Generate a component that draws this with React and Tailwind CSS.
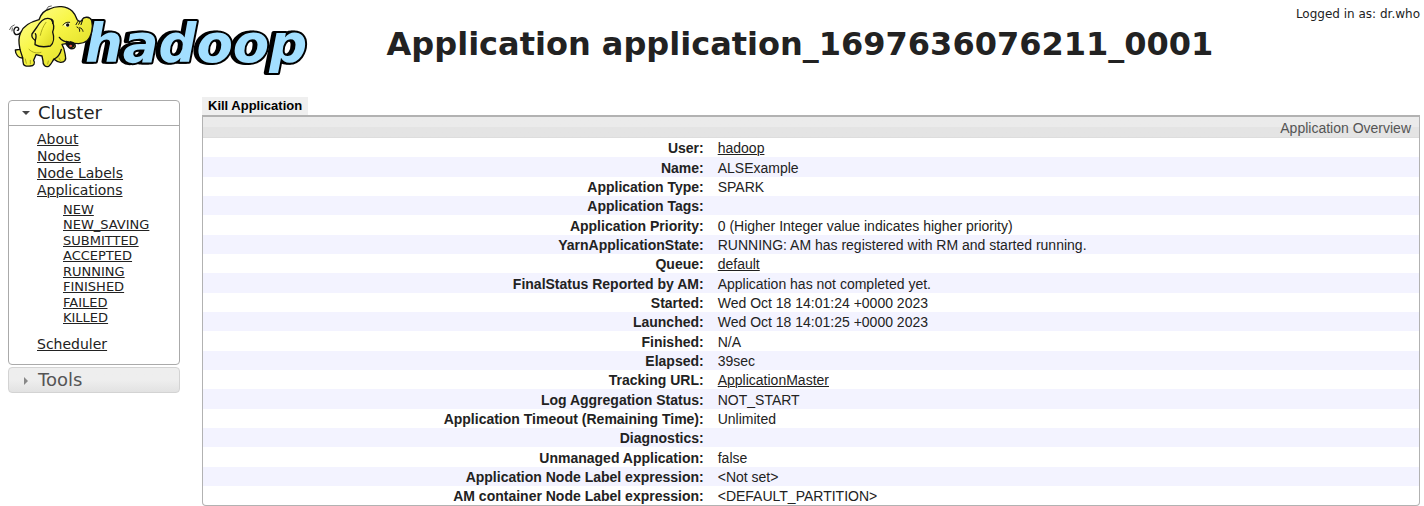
const states = [
  'NEW',
  'NEW_SAVING',
  'SUBMITTED',
  'ACCEPTED',
  'RUNNING',
  'FINISHED',
  'FAILED',
  'KILLED',
];

const overview = [
  ['User', 'hadoop', true],
  ['Name', 'ALSExample'],
  ['Application Type', 'SPARK'],
  ['Application Tags', ''],
  ['Application Priority', '0 (Higher Integer value indicates higher priority)'],
  ['YarnApplicationState', 'RUNNING: AM has registered with RM and started running.'],
  ['Queue', 'default', true],
  ['FinalStatus Reported by AM', 'Application has not completed yet.'],
  ['Started', 'Wed Oct 18 14:01:24 +0000 2023'],
  ['Launched', 'Wed Oct 18 14:01:25 +0000 2023'],
  ['Finished', 'N/A'],
  ['Elapsed', '39sec'],
  ['Tracking URL', 'ApplicationMaster', true],
  ['Log Aggregation Status', 'NOT_START'],
  ['Application Timeout (Remaining Time)', 'Unlimited'],
  ['Diagnostics', ''],
  ['Unmanaged Application', 'false'],
  ['Application Node Label expression', '<Not set>'],
  ['AM container Node Label expression', '<DEFAULT_PARTITION>'],
];

function Logo() {
  return (
    <svg className="h-20 w-[308px] shrink-0" viewBox="0 0 308 80" role="img" aria-label="hadoop">
      <defs>
        <linearGradient id="hide" x1="0" y1="0" x2="1" y2="1">
          <stop offset="0" stopColor="#ffffa0" />
          <stop offset="0.45" stopColor="#f8f646" />
          <stop offset="1" stopColor="#d9d51e" />
        </linearGradient>
      </defs>
      <text
        className="font-['DejaVu_Sans',sans-serif] font-bold italic drop-shadow-[-3px_0_0_#000]"
        x="85"
        y="62"
        fontSize="53"
        fill="#a2dfff"
        stroke="#000"
        strokeWidth="4"
        strokeLinejoin="round"
        paintOrder="stroke"
      >
        hadoop
      </text>
      <g transform="scale(0.3333)" stroke="#111" strokeWidth="4" strokeLinejoin="round" strokeLinecap="round">
        <path fill="none" d="M64 96C54 107 44 106 42 96C40 87 46 80 53 82C58 84 57 91 52 91" />
        <path
          fill="url(#hide)"
          d="M62 98C70 76 91 66 117 59C124 38 136 30 149 27C170 15 201 18 217 34C224 41 228 49 231 58C236 66 245 66 247 58C251 49 271 49 275 62C280 80 275 109 261 122C247 134 225 132 212 126C228 130 229 139 222 145C212 149 203 141 198 131L186 133C193 144 194 155 196 166C200 181 193 187 183 187C172 188 166 180 162 177C156 185 153 195 146 199C136 203 128 194 129 183L126 168L108 164L101 181C107 190 101 198 91 198C77 200 69 197 69 185L68 174C56 175 46 164 46 150L60 148C55 126 55 112 62 98Z"
        />
        <path fill="none" d="M163 177C174 171 181 161 184 148M60 148C62 156 66 166 68 174" />
        <path
          fill="url(#hide)"
          d="M154 58C137 49 121 64 111 81L96 102C94 111 99 117 106 121L105 134C119 142 137 141 151 138C162 129 163 111 158 96C163 84 162 71 154 58Z"
        />
        <path fill="none" d="M154 58C160 59 160 65 158 70M106 121C109 111 109 105 106 101M178 112C185 122 197 127 212 126" />
        <path fill="none" strokeWidth="3" d="M233 65L228 74M240 66L236 73M248 60L243 74M231 81C237 83 240 88 239 94M239 83C246 84 248 90 249 94" />
        <path fill="#111" d="M199 124C206 128 213 129 222 130C225 138 219 143 213 142C205 140 200 135 199 124Z" />
        <path fill="#df5440" stroke="none" d="M207 138C210 133 215 134 217 138C215 142 210 142 207 138Z" />
        <path fill="#fbfad0" stroke="none" d="M192 76C196 68 204 66 210 70C210 79 204 83 197 80Z" />
        <ellipse cx="203" cy="75" rx="5" ry="5.5" fill="#111" stroke="none" />
        <path fill="none" strokeWidth="3" d="M189 75C195 67 202 66 209 67" />
        <path fill="none" stroke="#aaa71c" strokeWidth="3" d="M76 177L79 190M91 181L91 191M145 183L143 192M177 174L181 181M87 148C98 159 111 161 123 157M138 67C129 79 124 93 121 106" />
        <path fill="none" strokeWidth="2" d="M29 89L34 80L43 75M36 93L37 84M140 28L145 20L154 18" />
      </g>
    </svg>
  );
}

function NavLink({ children }) {
  return <a href="#" className="underline decoration-1">{children}</a>;
}

export default function App() {
  return (
    <div className="bg-white font-['DejaVu_Sans',sans-serif] text-[#222222]">
      <header className="flex items-start">
        <Logo />
        <h1 className="min-w-0 flex-1 pt-6 pr-1 text-center text-[32px] leading-10 font-bold">
          Application application_1697636076211_0001
        </h1>
        <p className="shrink-0 pt-1 pr-1 text-xs leading-5">Logged in as: dr.who</p>
      </header>

      <div className="flex items-start gap-[22px] pr-1 pl-2">
        <nav className="mt-5 w-[172px] shrink-0">
          <section className="rounded border border-[#aaaaaa]">
            <h3 className="border-b border-[#aaaaaa]">
              <button type="button" className="flex h-6 w-full items-center gap-2 pl-3 text-lg leading-6">
                <svg className="h-2 w-[9px]" viewBox="0 0 9 8" fill="#454545"><path d="M1 2h8L5 6z" /></svg>
                Cluster
              </button>
            </h3>
            <ul className="pt-[5px] pb-[11px] pl-7 text-sm leading-[17px]">
              <li><NavLink>About</NavLink></li>
              <li><NavLink>Nodes</NavLink></li>
              <li><NavLink>Node Labels</NavLink></li>
              <li>
                <NavLink>Applications</NavLink>
                <ul className="mt-[3px] mb-2.5 pl-[26px] text-[13px]">
                  {states.map((s) => (
                    <li key={s} className="h-[15px] leading-[15px] nth-[2n]:h-4"><NavLink>{s}</NavLink></li>
                  ))}
                </ul>
              </li>
              <li><NavLink>Scheduler</NavLink></li>
            </ul>
          </section>
          <h3 className="mt-0.5 rounded border border-[#d3d3d3] bg-linear-to-b from-[#eeeeee] from-50% to-[#e2e2e2] text-[#555555]">
            <button type="button" className="flex h-6 w-full items-center gap-2 pl-3 text-lg leading-6">
              <svg className="h-[9px] w-[9px]" viewBox="0 0 9 9" fill="#888888"><path d="M3 1v8l4-4z" /></svg>
              Tools
            </button>
          </h3>
        </nav>

        <main className="mt-[17px] min-w-0 flex-1 font-['Liberation_Sans',sans-serif]">
          <button type="button" className="block h-[18px] bg-[#efefef] px-1.5 text-[13px] leading-[18px] font-bold text-black">
            Kill Application
          </button>
          <section className="rounded-b border border-t-2 border-[#b2b2b2]">
            <h2 className="border-b border-[#dddddd] bg-linear-to-b from-[#ebebeb] from-50% to-[#e4e4e4] to-50% px-2 pt-0.5 text-right text-sm leading-[18px] text-[#555555]">
              Application Overview
            </h2>
            <table className="w-full text-sm">
              <tbody>
                {overview.map(([label, value, link]) => (
                  <tr key={label} className="h-[19px] leading-[17px] nth-[3n+2]:h-5 even:bg-[#f3f3ff]">
                    <th scope="row" className="w-7/17 p-0 pt-0.5 text-right font-bold">{label}:</th>
                    <td className="p-0 pt-0.5 pl-3.5">{link ? <NavLink>{value}</NavLink> : value}</td>
                  </tr>
                ))}
              </tbody>
            </table>
          </section>
        </main>
      </div>
    </div>
  );
}
